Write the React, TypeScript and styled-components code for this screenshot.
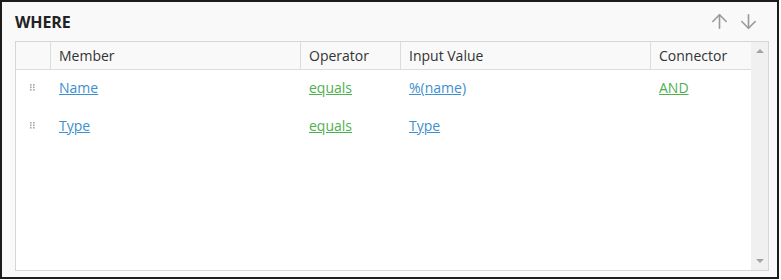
import styled, { createGlobalStyle } from 'styled-components';
import { ArrowUp, ArrowDown } from 'lucide-react';

interface IWhereRow {
  member: string;
  operator: string;
  value: string;
  connector?: string;
}

const ROWS: IWhereRow[] = [
  { member: 'Name', operator: 'equals', value: '%(name)', connector: 'AND' },
  { member: 'Type', operator: 'equals', value: 'Type' },
];

const GlobalStyle = createGlobalStyle`
  body {
    margin: 0;
    font-family: "Open Sans", "Noto Sans", sans-serif;
    color: #333;
  }
`;

function DragHandle() {
  return (
    <svg width="6" height="7" viewBox="0 0 6 7">
      {[0, 3].map(x => [0, 2.5, 5].map(y => <rect key={`${x}-${y}`} x={x} y={y} width="1.6" height="1.6" fill="#a8a8a8" />))}
    </svg>
  );
}

export default function App() {
  return (
    <>
      <GlobalStyle />
      <S.Panel>
        <S.TitleBar>
          <S.Title>WHERE</S.Title>
          <S.Arrows>
            <ArrowUp size={23} strokeWidth={1.7} color="#999" />
            <ArrowDown size={23} strokeWidth={1.7} color="#999" />
          </S.Arrows>
        </S.TitleBar>
        <S.Grid>
          <S.TableArea>
            <S.HeaderRow>
              <S.HeadCell $first />
              <S.HeadCell>Member</S.HeadCell>
              <S.HeadCell>Operator</S.HeadCell>
              <S.HeadCell>Input Value</S.HeadCell>
              <S.HeadCell>Connector</S.HeadCell>
            </S.HeaderRow>
            {ROWS.map(row => (
              <S.Row key={row.member}>
                <S.HandleCell>
                  <DragHandle />
                </S.HandleCell>
                <S.Cell>
                  <S.Link $tone="blue">{row.member}</S.Link>
                </S.Cell>
                <S.Cell>
                  <S.Link $tone="green">{row.operator}</S.Link>
                </S.Cell>
                <S.Cell>
                  <S.Link $tone="blue">{row.value}</S.Link>
                </S.Cell>
                <S.Cell>{row.connector && <S.Link $tone="green">{row.connector}</S.Link>}</S.Cell>
              </S.Row>
            ))}
          </S.TableArea>
          <S.Scrollbar>
            <S.Triangle $dir="up" />
            <S.Triangle $dir="down" />
          </S.Scrollbar>
        </S.Grid>
      </S.Panel>
    </>
  );
}

const COLUMNS = '34px 250px 100px 250px 1fr';

const S = {
  Panel: styled.div`
    box-sizing: border-box;
    width: 779px;
    height: 279px;
    border: 2px solid #1c1c1c;
    background: #f9f9f9;
    padding: 0 9px 0 13px;
  `,

  TitleBar: styled.div`
    display: flex;
    align-items: center;
    justify-content: space-between;
    height: 39px;
  `,

  Title: styled.h2`
    margin: 0;
    font-size: 16px;
    font-weight: 700;
    color: #222;
    letter-spacing: -0.1px;
  `,

  Arrows: styled.div`
    display: flex;
    gap: 6px;
    margin-right: 8px;
  `,

  Grid: styled.div`
    box-sizing: border-box;
    display: flex;
    width: 754px;
    height: 230px;
    border: 1px solid #d6d6d6;
    background: #fff;
  `,

  TableArea: styled.div`
    flex: 1;
    display: flex;
    flex-direction: column;
  `,

  HeaderRow: styled.div`
    display: grid;
    grid-template-columns: ${COLUMNS};
    height: 28px;
    box-sizing: border-box;
    border-bottom: 1px solid #dcdcdc;
    background: #f9f9f9;
  `,

  HeadCell: styled.div<{ $first?: boolean }>`
    display: flex;
    align-items: center;
    padding-left: 8px;
    border-left: ${p => (p.$first ? 'none' : '1px solid #dcdcdc')};
    font-size: 14px;
    color: #333;
  `,

  Row: styled.div`
    display: grid;
    grid-template-columns: ${COLUMNS};
    height: 38px;
  `,

  HandleCell: styled.div`
    display: flex;
    align-items: center;
    justify-content: center;
    padding-bottom: 4px;
  `,

  Cell: styled.div`
    display: flex;
    align-items: center;
    padding-left: 9px;
    padding-bottom: 4px;
    font-size: 14px;
  `,

  Link: styled.a<{ $tone: 'blue' | 'green' }>`
    color: ${p => (p.$tone === 'blue' ? '#3d8fcf' : '#4fb04f')};
    text-decoration: underline;
    cursor: pointer;
  `,

  Scrollbar: styled.div`
    width: 17px;
    background: #f0f0f0;
    display: flex;
    flex-direction: column;
    justify-content: space-between;
    align-items: center;
    padding: 7px 0;
  `,

  Triangle: styled.div<{ $dir: 'up' | 'down' }>`
    width: 0;
    height: 0;
    border-left: 4px solid transparent;
    border-right: 4px solid transparent;
    ${p => (p.$dir === 'up' ? 'border-bottom: 4px solid #a3a3a3;' : 'border-top: 4px solid #a3a3a3;')}
  `,
};
